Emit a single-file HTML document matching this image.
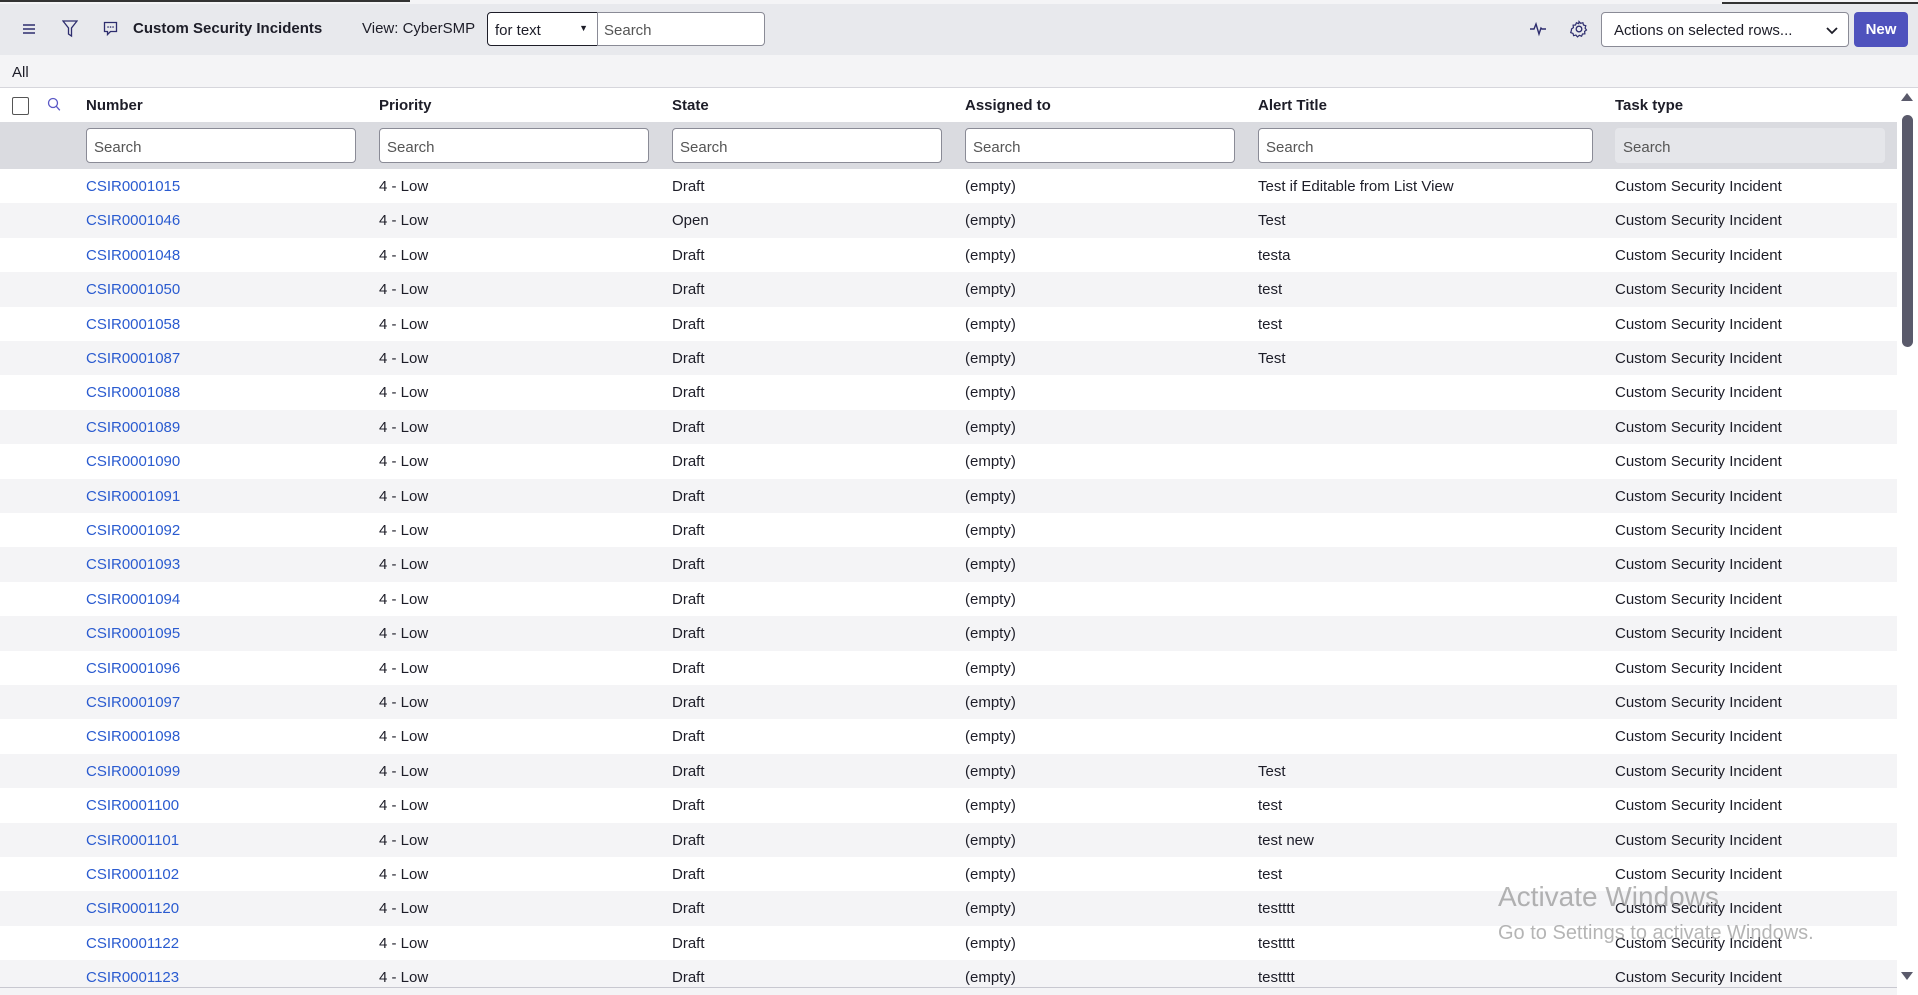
<!DOCTYPE html>
<html><head><meta charset="utf-8"><style>
*{box-sizing:border-box;margin:0;padding:0}
body{width:1918px;height:991px;overflow:hidden;background:#fff;font-family:"Liberation Sans",sans-serif;color:#1d1d28;font-size:15px;position:relative}
.top{position:absolute;left:0;top:0;width:1918px;height:55px;background:#e8e9ed;border-top:4px solid #f4f4f6}
.allbar{position:absolute;left:0;top:55px;width:1918px;height:33px;background:#f4f4f6;border-bottom:1px solid #d6d6dc}
.abs{position:absolute}
.hdr{position:absolute;top:88px;height:34px;width:1897px;left:0;background:#fff}
.hdr span{position:absolute;top:9px;font-weight:bold;font-size:15px}
.srow{position:absolute;top:122px;height:47px;left:0;width:1897px;background:#dadbe0}
.srow .in{position:absolute;top:6px;height:35px;background:#fff;border:1px solid #8a8b96;border-radius:4px;padding:10px 7px;color:#555;font-size:15px}
.row{position:absolute;left:0;width:1897px;height:34.4px}
.row span{position:absolute;top:9px}
.row .l{color:#2a5bd0}
.scroll{position:absolute;left:1897px;top:88px;width:21px;height:900px;background:#fff}
</style></head><body>
<div class="top"></div>
<div class="abs" style="left:0;top:0;width:410px;height:2px;background:#333"></div>
<div class="abs" style="left:1722px;top:2px;width:196px;height:2px;background:#333"></div>
<svg class="abs" style="left:22px;top:23px" width="14" height="12"><path d="M1 2h12M1 6h12M1 10h12" stroke="#2d2d6e" stroke-width="1.5"/></svg>
<svg class="abs" style="left:62px;top:20px" width="16" height="18"><path d="M1 1h14l-5.5 7v8l-3-2v-6z" fill="none" stroke="#2d2d6e" stroke-width="1.3"/></svg>
<svg class="abs" style="left:103px;top:21px" width="15" height="16"><path d="M1.5 1.5h12v9h-6l-3 3v-3h-3z" fill="none" stroke="#2d2d6e" stroke-width="1.3"/><path d="M5 6h.1M7.5 6h.1M10 6h.1" stroke="#2d2d6e" stroke-width="1.6" stroke-linecap="round"/></svg>
<div class="abs" style="left:133px;top:20px;font-weight:bold;font-size:15px">Custom Security Incidents</div>
<div class="abs" style="left:362px;top:20px;font-size:15px">View: CyberSMP</div>
<div class="abs" style="left:487px;top:12px;width:111px;height:34px;background:#fff;border:1px solid #1d1d28;border-radius:4px 0 0 4px;padding:9px 7px;font-size:15px">for text<span style="position:absolute;right:9px;top:10px;font-size:9px">▼</span></div>
<div class="abs" style="left:597px;top:12px;width:168px;height:34px;background:#fff;border:1px solid #8a8b96;border-radius:0 4px 4px 0;padding:9px 6px;color:#555;font-size:15px">Search</div>
<svg class="abs" style="left:1529px;top:21px" width="18" height="16"><path d="M1 8h4l2-5 3 10 2-6 1 1h4" fill="none" stroke="#2d2d6e" stroke-width="1.4"/></svg>
<svg class="abs" style="left:1570px;top:20px" width="18" height="18"><circle cx="9" cy="9" r="2.8" fill="none" stroke="#2d2d6e" stroke-width="1.3"/><path d="M9 1.5l1.6 1.8 2.3-.6.6 2.3 2.3.8-.7 2.3 1.4 1.9-1.9 1.4.3 2.4-2.4.2-.9 2.2-2.3-.9-1.8 1.6-1.6-1.8-2.3.6-.6-2.3-2.3-.8.7-2.3L1.5 9l1.9-1.4-.3-2.4 2.4-.2.9-2.2 2.3.9z" fill="none" stroke="#2d2d6e" stroke-width="1.2"/></svg>
<div class="abs" style="left:1601px;top:12px;width:248px;height:35px;background:#fff;border:1px solid #8a8b96;border-radius:4px;padding:9px 12px;font-size:15px">Actions on selected rows...<svg style="position:absolute;right:10px;top:14px" width="12" height="8"><path d="M1 1l5 5 5-5" fill="none" stroke="#1d1d28" stroke-width="1.8"/></svg></div>
<div class="abs" style="left:1854px;top:12px;width:54px;height:35px;background:#4f52bd;border-radius:4px;color:#fff;font-weight:bold;font-size:15px;text-align:center;line-height:35px">New</div>
<div class="allbar"></div>
<div class="abs" style="left:12px;top:64px;font-size:15px">All</div>
<div class="hdr">
<div class="abs" style="left:12px;top:9px;width:17px;height:18px;border:1.5px solid #555;border-radius:2px"></div>
<svg class="abs" style="left:47px;top:9px" width="14" height="15"><circle cx="6" cy="6" r="4.5" fill="none" stroke="#5a58c6" stroke-width="1.3"/><path d="M9.3 9.3l3.5 4" stroke="#5a58c6" stroke-width="1.3"/></svg>
<span style="left:86px">Number</span><span style="left:379px">Priority</span><span style="left:672px">State</span><span style="left:965px">Assigned to</span><span style="left:1258px">Alert Title</span><span style="left:1615px">Task type</span>
</div>
<div class="srow">
<div class="in" style="left:86px;width:270px">Search</div>
<div class="in" style="left:379px;width:270px">Search</div>
<div class="in" style="left:672px;width:270px">Search</div>
<div class="in" style="left:965px;width:270px">Search</div>
<div class="in" style="left:1258px;width:335px">Search</div>
<div class="in" style="left:1615px;width:270px;background:#e5e6ea;border-color:#e5e6ea">Search</div>
</div>
<div id="rows"></div>
<div class="scroll">
<svg class="abs" style="left:3px;top:4px" width="14" height="10"><path d="M1 9L7 1l6 8z" fill="#5a5a6b"/></svg>
<div class="abs" style="left:5px;top:27px;width:11px;height:232px;background:#5a5a6b;border-radius:6px"></div>
<svg class="abs" style="left:3px;top:883px" width="14" height="10"><path d="M1 1l6 8 6-8z" fill="#5a5a6b"/></svg>
</div>
<div class="abs" style="left:0;top:987px;width:1897px;height:1px;background:#c8c8d0"></div>
<div class="abs" style="left:1498px;top:881px;font-size:28px;color:rgba(120,120,120,.55)">Activate Windows</div>
<div class="abs" style="left:1498px;top:922px;font-size:20px;color:rgba(120,120,120,.55)">Go to Settings to activate Windows.</div>
<script>
var d=[["1015","Draft","Test if Editable from List View"],["1046","Open","Test"],["1048","Draft","testa"],["1050","Draft","test"],["1058","Draft","test"],["1087","Draft","Test"],["1088","Draft",""],["1089","Draft",""],["1090","Draft",""],["1091","Draft",""],["1092","Draft",""],["1093","Draft",""],["1094","Draft",""],["1095","Draft",""],["1096","Draft",""],["1097","Draft",""],["1098","Draft",""],["1099","Draft","Test"],["1100","Draft","test"],["1101","Draft","test new"],["1102","Draft","test"],["1120","Draft","testttt"],["1122","Draft","testttt"],["1123","Draft","testttt"]];
var h="";d.forEach(function(r,i){h+='<div class="row" style="top:'+(169+i*34.4)+'px;background:'+(i%2?'#f4f4f6':'#fff')+'"><span class="l" style="left:86px">CSIR000'+r[0]+'</span><span style="left:379px">4 - Low</span><span style="left:672px">'+r[1]+'</span><span style="left:965px">(empty)</span><span style="left:1258px">'+r[2]+'</span><span style="left:1615px">Custom Security Incident</span></div>';});
document.getElementById("rows").outerHTML=h;
</script>
<div class="abs" style="left:1897px;top:985px;width:21px;height:6px;background:#fff"></div>
</body></html>
